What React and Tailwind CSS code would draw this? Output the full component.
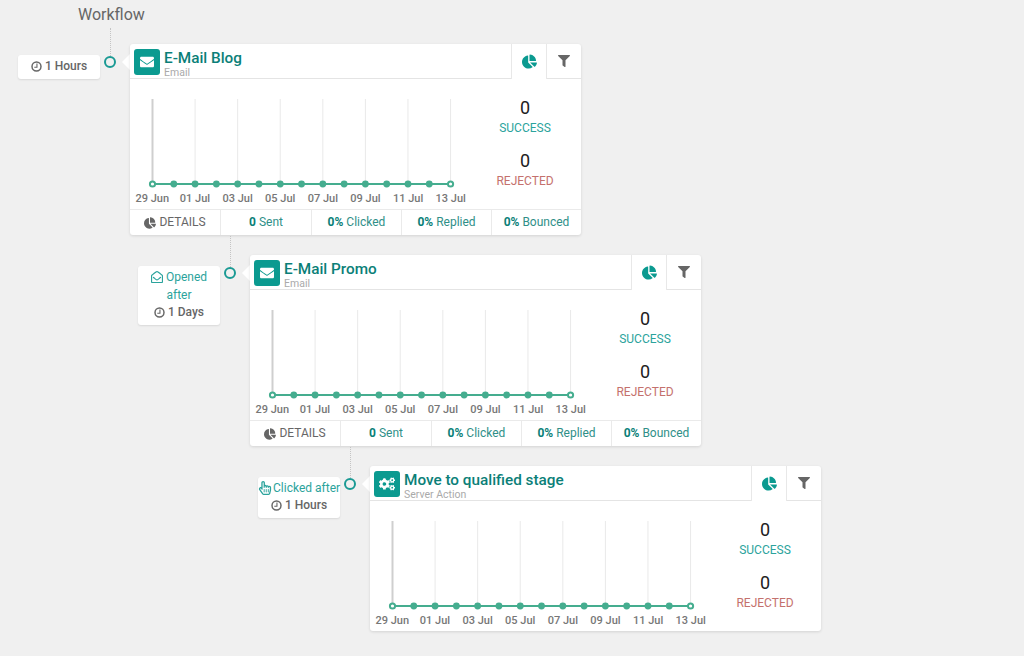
import React from "react";
import {
  FaChartPie,
  FaCogs,
  FaEnvelope,
  FaFilter,
  FaRegEnvelopeOpen,
  FaRegHandPointer,
} from "react-icons/fa";

const DAYS = ["29 Jun", "01 Jul", "03 Jul", "05 Jul", "07 Jul", "09 Jul", "11 Jul", "13 Jul"];
const STEP = 21.29;

const Chart = () => {
  const xs = Array.from({ length: 15 }, (_, i) => 21.5 + i * STEP);
  return (
    <div className="w-[341px]">
      <svg width="341" height="92" className="block">
        {xs.map((x, i) =>
          i % 2 === 0 ? (
            <line
              key={x}
              x1={x}
              x2={x}
              y1="1"
              y2="86"
              stroke={i === 0 ? "#cfcfcf" : "#e9e9e9"}
              strokeWidth={i === 0 ? 2 : 1}
            />
          ) : null
        )}
        <line x1={xs[0]} x2={xs[14]} y1="86" y2="86" stroke="#45ad8f" strokeWidth="2" />
        {xs.map((x, i) =>
          i === 0 || i === 14 ? (
            <circle key={x} cx={x} cy="86" r="2.6" fill="#fff" stroke="#45ad8f" strokeWidth="2" />
          ) : (
            <circle key={x} cx={x} cy="86" r="3.4" fill="#45ad8f" />
          )
        )}
      </svg>
      <div className="grid grid-cols-8 mt-[2px] text-[11px] leading-[14px] text-[#777] font-medium">
        {DAYS.map((d) => (
          <span key={d} className="text-center whitespace-nowrap">
            {d}
          </span>
        ))}
      </div>
    </div>
  );
};

const Stat = ({ label, color }) => (
  <div className="flex flex-col items-center">
    <span className="text-[18px] leading-[24px] text-[#212121]">0</span>
    <span className={`text-[12px] leading-[16px] ${color}`}>{label}</span>
  </div>
);

const Card = ({ title, sub, icon, footer }) => (
  <div className="w-[451px] bg-white rounded-[3px] shadow-[0_1px_3px_rgba(0,0,0,0.12)]">
    {/* header */}
    <div className="flex h-[35px]">
      <div className="w-[381px] border-b border-[#e4e4e4] flex pl-[4px] pt-[5px]">
        <div className="w-[26px] h-[26px] rounded-[3px] bg-[#0b9a90] text-white flex items-center justify-center text-[14px]">
          {icon}
        </div>
        <div className="ml-[4px]">
          <div className="text-[15.3px] leading-[18px] font-medium text-[#0b7f78]">{title}</div>
          <div className="text-[10.5px] leading-[11px] text-[#aaa]">{sub}</div>
        </div>
      </div>
      <div className="w-[36px] border-x border-[#e8e8e8] flex items-center justify-center text-[15px] text-[#0b9a90]">
        <FaChartPie />
      </div>
      <div className="w-[34px] border-b border-[#e4e4e4] flex items-center justify-center text-[12px] text-[#666]">
        <FaFilter />
      </div>
    </div>
    {/* body */}
    <div className="flex pt-[19px] h-[130px]">
      <div className="ml-[1px]">
        <Chart />
      </div>
      <div className="w-[106px] flex flex-col items-center gap-[13px] -mt-[2px]">
        <Stat label="SUCCESS" color="text-[#2ba39c]" />
        <Stat label="REJECTED" color="text-[#c4716d]" />
      </div>
    </div>
    {footer && (
      <div className="grid grid-cols-[90px_91px_90px_90px_90px] h-[26px] border-t border-[#eaeaea] text-[12px] text-center leading-[25px] text-[#2f8f88]">
        <div className="text-[#666] flex items-center justify-center gap-[3px]">
          <FaChartPie className="text-[12px]" />
          DETAILS
        </div>
        <div className="border-l border-[#eaeaea]">
          <b className="font-bold text-[#0b7f78]">0</b> Sent
        </div>
        <div className="border-l border-[#eaeaea]">
          <b className="font-bold text-[#0b7f78]">0%</b> Clicked
        </div>
        <div className="border-l border-[#eaeaea]">
          <b className="font-bold text-[#0b7f78]">0%</b> Replied
        </div>
        <div className="border-l border-[#eaeaea]">
          <b className="font-bold text-[#0b7f78]">0%</b> Bounced
        </div>
      </div>
    )}
  </div>
);

const ClockIcon = () => (
  <svg width="11" height="11" viewBox="0 0 12 12" fill="none" stroke="currentColor" strokeWidth="1.6">
    <circle cx="6" cy="6" r="4.9" />
    <path d="M6.5 2.8V6.8H3.6" strokeWidth="1.2" />
  </svg>
);

const Duration = ({ text }) => (
  <div className="-mt-[1px] flex items-center justify-center gap-[3px] font-medium text-[#666]">
    <ClockIcon />
    {text}
  </div>
);

const Row = ({ indent, trigger, duration, card, tall }) => (
  <div className={`relative flex items-start ${indent}`}>
    {/* dotted connector */}
    <div
      className={`absolute left-[92px] w-0 border-l border-dotted border-[#c4c4c4] ${
        tall ? "-top-[16px] h-[28px]" : "-top-[19px] h-[31px]"
      }`}
    />
    <div className="w-[82px] mt-[11px] bg-white rounded-[3px] shadow-[0_1px_2px_rgba(0,0,0,0.1)] text-[12px] leading-[18px] text-center text-[#2ba39c] pt-[3px] pb-[4px]">
      {trigger && <div className="-mt-[1px]">{trigger}</div>}
      <Duration text={duration} />
    </div>
    <div className="w-[12px] h-[12px] ml-[4px] mt-[12px] rounded-full border-2 border-[#1a9a94] bg-[#f0f0f0]" />
    <div className="ml-[6px] mt-[10px] w-0 h-0 border-y-[8px] border-y-transparent border-r-[8px] border-r-white" />
    <Card {...card} />
  </div>
);

export default function App() {
  return (
    <div className="h-screen overflow-hidden bg-[#f0f0f0] font-['Roboto',sans-serif]">
      <div className="ml-[78px] pt-[5px] h-[44px] text-[16px] leading-[20px] text-[#666]">Workflow</div>
      <div className="ml-[18px] flex flex-col gap-[20px]">
        <Row
          indent=""
          tall
          duration="1 Hours"
          card={{ title: "E-Mail Blog", sub: "Email", icon: <FaEnvelope />, footer: true }}
        />
        <Row
          indent="ml-[120px]"
          trigger={
            <>
              <FaRegEnvelopeOpen className="inline text-[12px] mr-[3px] -mt-[2px]" />
              Opened after
            </>
          }
          duration="1 Days"
          card={{ title: "E-Mail Promo", sub: "Email", icon: <FaEnvelope />, footer: true }}
        />
        <Row
          indent="ml-[240px]"
          trigger={
            <div className="whitespace-nowrap">
              <FaRegHandPointer className="inline text-[14px] mr-[1px] -mt-[2px]" />
              Clicked after
            </div>
          }
          duration="1 Hours"
          card={{
            title: "Move to qualified stage",
            sub: "Server Action",
            icon: <FaCogs className="text-[16px]" />,
          }}
        />
      </div>
    </div>
  );
}
